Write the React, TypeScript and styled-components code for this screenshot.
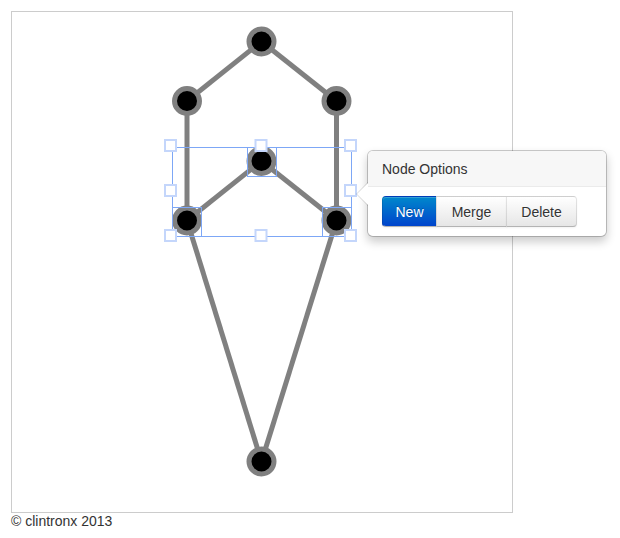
import React from 'react';
import styled, { createGlobalStyle } from 'styled-components';

const GlobalStyle = createGlobalStyle`
  body {
    margin: 0;
    font-family: "Liberation Sans", Arial, sans-serif;
    font-size: 14px;
    line-height: 20px;
    color: #333;
    background: #fff;
  }
`;

const Page = styled.div`
  padding: 11px 0 0 11px;
  position: relative;
`;

const Canvas = styled.div`
  width: 500px;
  height: 500px;
  border: 1px solid #ccc;
  position: relative;
`;

const Footer = styled.div`
  font-size: 14px;
  line-height: 16px;
  color: #333;
`;

const Popover = styled.div`
  position: absolute;
  left: 355px;
  top: 138px;
  width: 238px;
  background: #fff;
  border: 1px solid rgba(0, 0, 0, 0.2);
  border-radius: 6px;
  box-shadow: 0 5px 10px rgba(0, 0, 0, 0.2);
  background-clip: padding-box;

  &:before,
  &:after {
    content: '';
    position: absolute;
    top: 50%;
    border-style: solid;
    border-color: transparent;
  }

  &:before {
    left: -12px;
    margin-top: -12px;
    border-width: 12px 12px 12px 0;
    border-right-color: rgba(0, 0, 0, 0.15);
  }

  &:after {
    left: -11px;
    margin-top: -11px;
    border-width: 11px 11px 11px 0;
    border-right-color: #fff;
  }
`;

const PopoverTitle = styled.div`
  padding: 9px 14px 8px;
  font-size: 14px;
  line-height: 18px;
  background: #f7f7f7;
  border-bottom: 1px solid #ebebeb;
  border-radius: 5px 5px 0 0;
`;

const PopoverContent = styled.div`
  padding: 9px 14px 9px;
`;

const ButtonGroup = styled.div`
  display: inline-flex;
`;

const Button = styled.button<{ $primary?: boolean; $width: number }>`
  font-family: inherit;
  font-size: 14px;
  line-height: 20px;
  width: ${(p) => p.$width}px;
  padding: 5px 0 4px;
  margin: 0 0 0 -1px;
  text-align: center;
  border: 1px solid #ccc;
  border-color: rgba(0, 0, 0, 0.1) rgba(0, 0, 0, 0.1) rgba(0, 0, 0, 0.25);
  border-bottom-color: #b3b3b3;
  color: ${(p) => (p.$primary ? '#fff' : '#333')};
  text-shadow: ${(p) =>
    p.$primary ? '0 -1px 0 rgba(0,0,0,0.25)' : '0 1px 1px rgba(255,255,255,0.75)'};
  background-image: ${(p) =>
    p.$primary
      ? 'linear-gradient(to bottom, #0088cc, #0044cc)'
      : 'linear-gradient(to bottom, #ffffff, #e6e6e6)'};
  background-color: ${(p) => (p.$primary ? '#0055cc' : '#f5f5f5')};
  box-shadow: inset 0 1px 0 rgba(255, 255, 255, 0.2), 0 1px 2px rgba(0, 0, 0, 0.05);
  border-radius: 0;
  cursor: pointer;

  &:first-child {
    margin-left: 0;
    border-radius: 4px 0 0 4px;
  }

  &:last-child {
    border-radius: 0 4px 4px 0;
  }
`;

const Graph = styled.svg`
  display: block;
`;

type Pt = [number, number];

const nodes: Record<string, Pt> = {
  a: [261.5, 41.5],
  b: [187, 101],
  c: [336.5, 101],
  d: [261.5, 161],
  e: [187, 220.5],
  f: [336.5, 220.5],
  g: [261.5, 461.5],
};

const edges: [string, string][] = [
  ['a', 'b'],
  ['a', 'c'],
  ['b', 'e'],
  ['c', 'f'],
  ['d', 'e'],
  ['d', 'f'],
  ['e', 'g'],
  ['f', 'g'],
];

const nodeBoxes = [
  [247.5, 147.5, 29, 29],
  [172.5, 207.5, 29, 29],
  [322.5, 207.5, 29, 29],
];

const handleXs = [170.5, 261, 350.5];
const handleYs = [145.5, 190.5, 235.5];

export default function App() {
  const handles: Pt[] = [];
  handleYs.forEach((y, yi) =>
    handleXs.forEach((x, xi) => {
      if (xi === 1 && yi === 1) return;
      handles.push([x, y]);
    })
  );

  return (
    <>
      <GlobalStyle />
      <Page>
        <Canvas>
          <Graph width={500} height={500} viewBox="12 12 500 500">
            {edges.map(([from, to]) => (
              <line
                key={from + to}
                x1={nodes[from][0]}
                y1={nodes[from][1]}
                x2={nodes[to][0]}
                y2={nodes[to][1]}
                stroke="#808080"
                strokeWidth={5}
              />
            ))}
            {Object.entries(nodes).map(([id, [x, y]]) => (
              <circle key={id} cx={x} cy={y} r={12.5} fill="#000" stroke="#808080" strokeWidth={5} />
            ))}
            <rect x={172.5} y={147.5} width={179} height={89} fill="none" stroke="#7da7f6" strokeWidth={1} />
            {nodeBoxes.map(([x, y, w, h], i) => (
              <rect key={i} x={x} y={y} width={w} height={h} fill="none" stroke="#7da7f6" strokeWidth={1} />
            ))}
            {handles.map(([x, y], i) => (
              <rect
                key={i}
                x={x - 5.5}
                y={y - 5.5}
                width={11}
                height={11}
                fill="#fff"
                stroke="#c4d6fb"
                strokeWidth={2}
              />
            ))}
          </Graph>
          <Popover>
            <PopoverTitle>Node Options</PopoverTitle>
            <PopoverContent>
              <ButtonGroup>
                <Button $primary $width={55}>New</Button>
                <Button $width={71}>Merge</Button>
                <Button $width={71}>Delete</Button>
              </ButtonGroup>
            </PopoverContent>
          </Popover>
        </Canvas>
        <Footer>© clintronx 2013</Footer>
      </Page>
    </>
  );
}
